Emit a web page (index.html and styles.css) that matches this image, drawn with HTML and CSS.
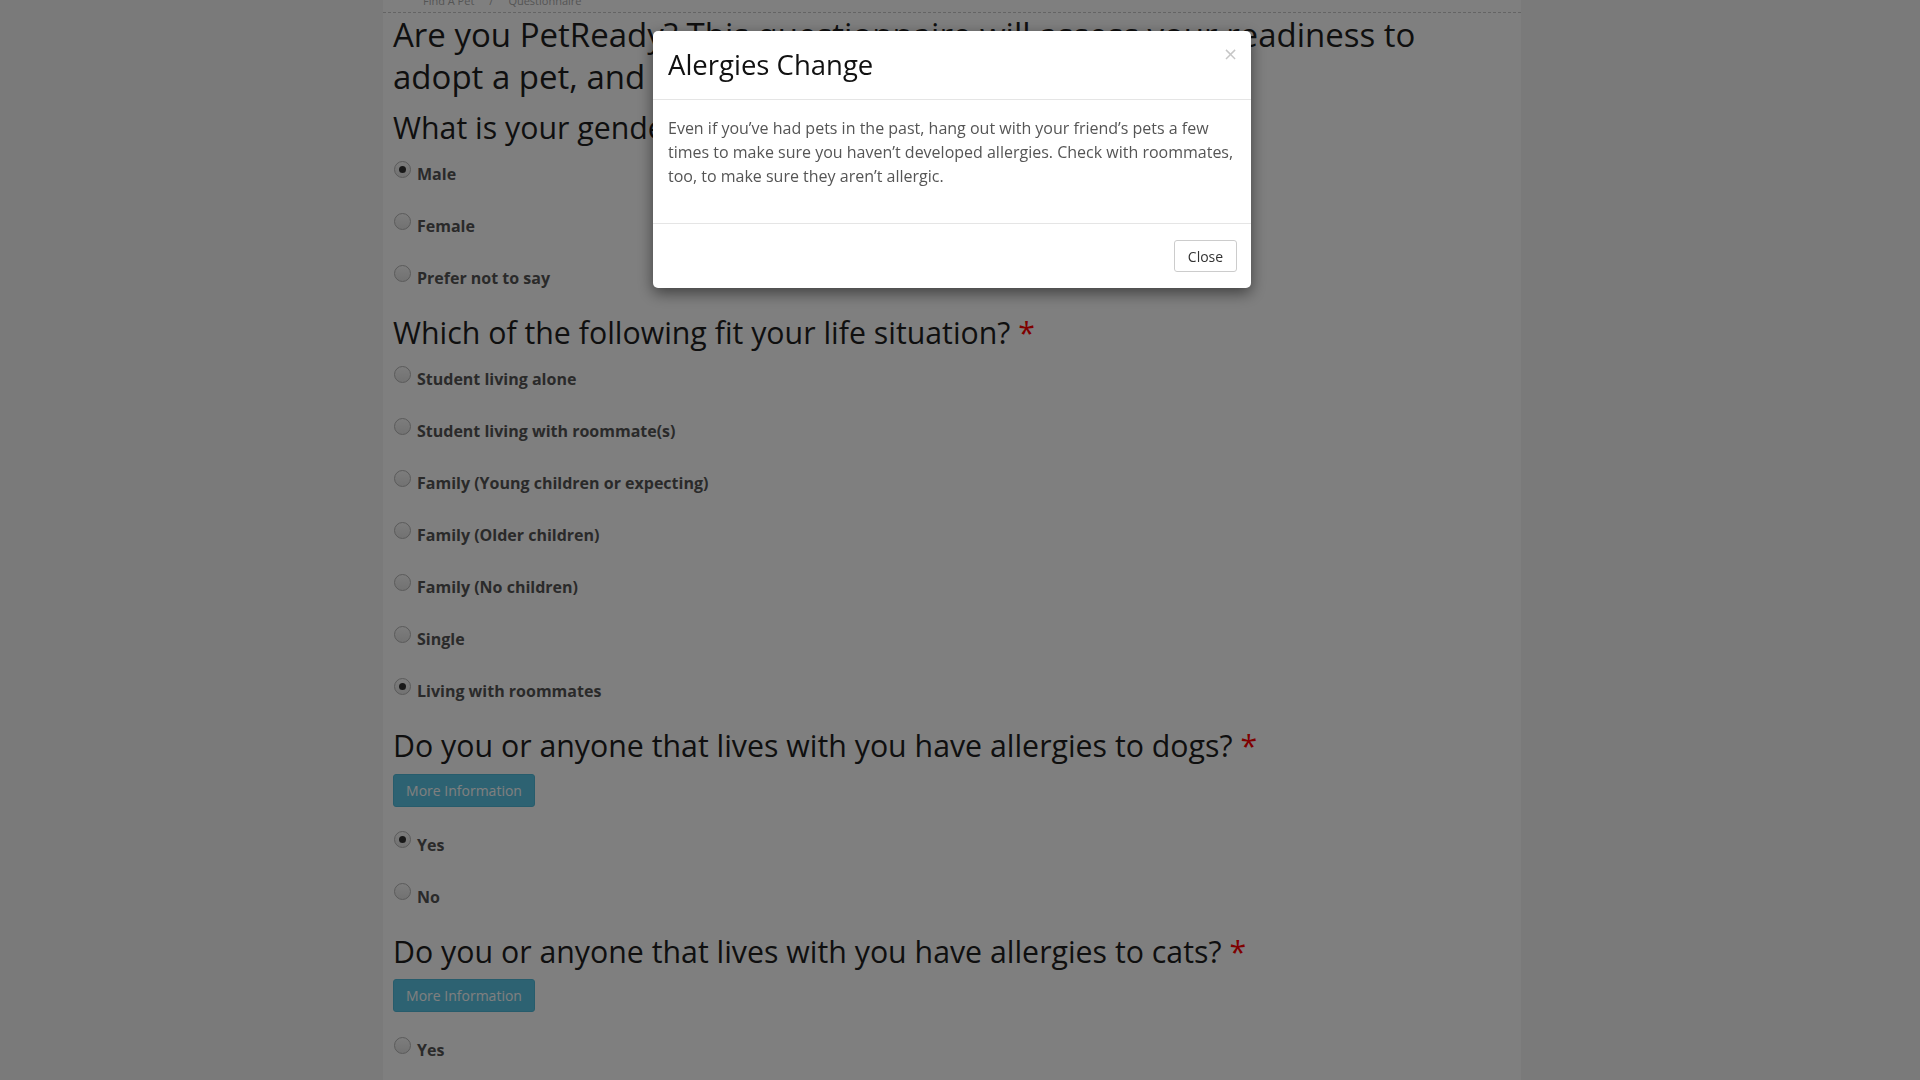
FILE: index.html
```html
<!DOCTYPE html>
<html lang="en">
<head>
<meta charset="utf-8">
<title>PetReady Questionnaire</title>
<link rel="stylesheet" href="styles.css">
</head>
<body>
<div class="page">
  <div class="container">
    <div class="breadcrumb">
      <span class="crumb">Find A Pet</span>
      <span class="sep">/</span>
      <span class="crumb">Questionnaire</span>
    </div>
    <h2 class="intro">Are you PetReady? This questionnaire will assess your readiness to<br>adopt a pet, and help you find the right pet.</h2>

    <h3 class="question">What is your gender?</h3>
    <div class="options">
      <label class="option"><span class="radio checked"></span>Male</label>
      <label class="option"><span class="radio"></span>Female</label>
      <label class="option"><span class="radio"></span>Prefer not to say</label>
    </div>

    <h3 class="question">Which of the following fit your life situation? <span class="req">*</span></h3>
    <div class="options">
      <label class="option"><span class="radio"></span>Student living alone</label>
      <label class="option"><span class="radio"></span>Student living with roommate(s)</label>
      <label class="option"><span class="radio"></span>Family (Young children or expecting)</label>
      <label class="option"><span class="radio"></span>Family (Older children)</label>
      <label class="option"><span class="radio"></span>Family (No children)</label>
      <label class="option"><span class="radio"></span>Single</label>
      <label class="option"><span class="radio checked"></span>Living with roommates</label>
    </div>

    <h3 class="question">Do you or anyone that lives with you have allergies to dogs? <span class="req">*</span></h3>
    <button class="btn-info" type="button">More Information</button>
    <div class="options">
      <label class="option"><span class="radio checked"></span>Yes</label>
      <label class="option"><span class="radio"></span>No</label>
    </div>

    <h3 class="question">Do you or anyone that lives with you have allergies to cats? <span class="req">*</span></h3>
    <button class="btn-info" type="button">More Information</button>
    <div class="options">
      <label class="option"><span class="radio"></span>Yes</label>
      <label class="option"><span class="radio"></span>No</label>
    </div>
  </div>
</div>

<div class="backdrop"></div>
<div class="modal">
  <div class="modal-dialog">
    <div class="modal-header">
      <button class="close" type="button">&times;</button>
      <h4 class="modal-title">Alergies Change</h4>
    </div>
    <div class="modal-body">
      <p>Even if you’ve had pets in the past, hang out with your friend’s pets a few<br>times to make sure you haven’t developed allergies. Check with roommates,<br>too, to make sure they aren’t allergic.</p>
    </div>
    <div class="modal-footer">
      <button class="btn-default" type="button">Close</button>
    </div>
  </div>
</div>
</body>
</html>
```

FILE: styles.css
```css
html, body {
  margin: 0;
  padding: 0;
  height: 100%;
  overflow: hidden;
}
body {
  background: #f4f4f4;
  font-family: "Open Sans", "Noto Sans", sans-serif;
  color: #222;
}
.page {
  width: 1904px;
}
.container {
  width: 1138px;
  margin: 0 auto;
  box-sizing: border-box;
  padding: 0 10px;
  background: #fff;
  min-height: 1200px;
}
.breadcrumb {
  margin: -9px -10px 0;
  padding: 0 0 1px 40px;
  height: 20px;
  line-height: 20px;
  font-size: 11px;
  color: #aaa;
  border-bottom: 1px dashed #c8c8c8;
  display: flex;
  gap: 15px;
}
.intro {
  margin: 1px 0 0;
  font-size: 33px;
  line-height: 42px;
  font-weight: 400;
  color: #1e1e1e;
}
.question {
  margin: 11px 0 3px;
  font-size: 30.3px;
  line-height: 34px;
  font-weight: 400;
  color: #1e1e1e;
}
.intro + .question {
  margin-top: 13px;
}
.req {
  color: #f00;
}
.options {
  display: flex;
  flex-direction: column;
}
.option {
  height: 52px;
  display: flex;
  align-items: center;
  font-size: 16px;
  font-weight: 700;
  color: #555;
  padding-left: 1px;
}
.radio {
  width: 15px;
  height: 15px;
  border-radius: 50%;
  border: 1px solid #b5b5b5;
  background: linear-gradient(#fafafa, #e4e4e4);
  margin-right: 6px;
  position: relative;
  top: -5px;
  flex: none;
}
.radio.checked::after {
  content: "";
  position: absolute;
  left: 4px;
  top: 4px;
  width: 7px;
  height: 7px;
  border-radius: 50%;
  background: #333;
}
.btn-info {
  display: block;
  margin: 10.5px 0 12px;
  height: 33px;
  width: 142px;
  padding: 0;
  border: 1px solid #4fb9d8;
  border-radius: 3px;
  background: #5bc5e4;
  color: #fff;
  font-family: "Open Sans", "Noto Sans", sans-serif;
  font-size: 14px;
}
.options + .question {
  margin-top: 12px;
}

.backdrop {
  position: fixed;
  inset: 0;
  background: rgba(0, 0, 0, 0.5);
}
.modal {
  position: fixed;
  top: 0;
  left: 0;
  width: 1904px;
  height: 100%;
}
.modal-dialog {
  width: 598px;
  margin: 31px auto 0;
  background: #fff;
  border-radius: 5px;
  box-shadow: 0 5px 15px rgba(0, 0, 0, 0.5);
  overflow: hidden;
}
.modal-header {
  padding: 16px 15px;
  border-bottom: 1px solid #e5e5e5;
}
.modal-title {
  margin: 0;
  font-size: 27.5px;
  line-height: 36px;
  font-weight: 400;
  color: #111;
}
.close {
  float: right;
  margin: -3px -2px 0 0;
  padding: 0;
  border: 0;
  background: transparent;
  font-family: "DejaVu Sans", sans-serif;
  font-size: 18px;
  line-height: 20px;
  color: #000;
  opacity: 0.22;
}
.modal-body {
  padding: 16px 15px 35px;
}
.modal-body p {
  margin: 0;
  font-size: 16px;
  line-height: 24px;
  color: #555;
}
.modal-footer {
  padding: 16px 14px 16px 15px;
  border-top: 1px solid #e5e5e5;
  display: flex;
  justify-content: flex-end;
}
.btn-default {
  height: 32px;
  width: 63px;
  padding: 0;
  border: 1px solid #ccc;
  border-radius: 3px;
  background: #fff;
  color: #333;
  font-family: "Open Sans", "Noto Sans", sans-serif;
  font-size: 14px;
}
```
